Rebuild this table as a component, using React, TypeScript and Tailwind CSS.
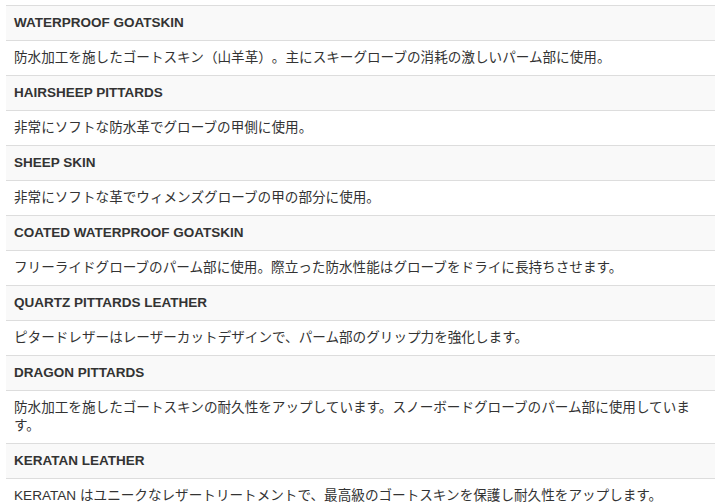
const rows = [
  {
    title: "WATERPROOF GOATSKIN",
    body: "防水加工を施したゴートスキン（山羊革）。主にスキーグローブの消耗の激しいパーム部に使用。",
  },
  { title: "HAIRSHEEP PITTARDS", body: "非常にソフトな防水革でグローブの甲側に使用。" },
  { title: "SHEEP SKIN", body: "非常にソフトな革でウィメンズグローブの甲の部分に使用。" },
  {
    title: "COATED WATERPROOF GOATSKIN",
    body: "フリーライドグローブのパーム部に使用。際立った防水性能はグローブをドライに長持ちさせます。",
  },
  {
    title: "QUARTZ PITTARDS LEATHER",
    body: "ピタードレザーはレーザーカットデザインで、パーム部のグリップ力を強化します。",
  },
  {
    title: "DRAGON PITTARDS",
    body: "防水加工を施したゴートスキンの耐久性をアップしています。スノーボードグローブのパーム部に使用しています。",
  },
  {
    title: "KERATAN LEATHER",
    body: "KERATAN はユニークなレザートリートメントで、最高級のゴートスキンを保護し耐久性をアップします。",
  },
];

export default function App() {
  return (
    <div className="w-[720px] h-[504px] overflow-hidden bg-white pt-[5px] pl-[6px] pr-[5px]">
      <div className="flex flex-col text-[#333]">
        {rows.map((r) => (
          <div key={r.title} className="flex flex-col">
            <div className="border-t border-[#ddd] bg-[#f9f9f9] px-2 py-2 text-[13.5px] leading-[18px] font-bold font-['Liberation_Sans',Arial,sans-serif]">
              {r.title}
            </div>
            <div className="border-t border-[#ddd] bg-white pl-2 pr-3 py-2 text-[13.6px] leading-[18px] [text-spacing-trim:space-all] font-['Liberation_Sans','Noto_Sans_CJK_JP',sans-serif]">
              {r.body}
            </div>
          </div>
        ))}
      </div>
    </div>
  );
}
